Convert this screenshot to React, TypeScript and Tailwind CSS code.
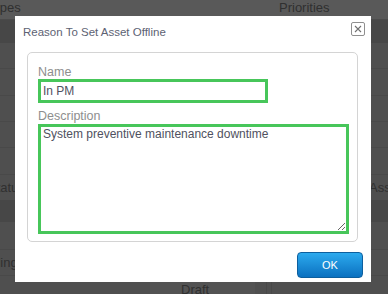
import React from 'react'

function CloseIcon() {
  return (
    <svg width="8" height="8" viewBox="0 0 8 8" className="text-[#707070]">
      <path d="M1 1L7 7M7 1L1 7" stroke="currentColor" strokeWidth="1.1" />
    </svg>
  )
}

// page behind the dialog, dimmed by the overlay
function BackgroundPage() {
  return (
    <div className="flex flex-col h-full bg-[#e2e2e2] text-[13px] leading-4 text-[#8a8a8a]">
      <div className="h-[20px] shrink-0 bg-white flex border-b border-[#d6d6d6]">
        <div className="w-[279px] shrink-0 overflow-hidden">
          <span className="block -ml-[14px]">Types</span>
        </div>
        <span>Priorities</span>
      </div>
      <div className="h-[23px] shrink-0 bg-[#cbcbcb]" />
      <div className="h-[26px] shrink-0 border-b border-[#d2d2d2]" />
      <div className="h-[27px] shrink-0 border-b border-[#d2d2d2]" />
      <div className="h-[26px] shrink-0 border-b border-[#d2d2d2]" />
      <div className="h-[26px] shrink-0 border-b border-[#d2d2d2]" />
      <div className="h-[27px] shrink-0 border-b border-[#d2d2d2]" />
      <div className="h-[25px] shrink-0 flex items-center">
        <div className="w-[369px] shrink-0 overflow-hidden">
          <span className="block -ml-[12px]">Status</span>
        </div>
        <span>Asset</span>
      </div>
      <div className="h-[22px] shrink-0 bg-[#cbcbcb]" />
      <div className="h-[28px] shrink-0 border-b border-[#d2d2d2]" />
      <div className="h-[26px] shrink-0 flex items-center overflow-hidden border-b border-[#d2d2d2]">
        <span className="block -ml-[30px]">Pending</span>
      </div>
      <div className="flex-1 flex">
        <div className="w-[150px] shrink-0" />
        <div className="w-[105px] shrink-0 bg-[#eeeeee] pl-[31px] pt-[6px]">Draft</div>
        <div className="w-[12px] shrink-0 border-r border-[#cfcfcf]" />
        <div className="w-[5px] shrink-0 border-r border-[#cfcfcf]" />
      </div>
    </div>
  )
}

function Dialog() {
  return (
    <div className="absolute left-[15px] top-[16px] w-[356px] h-[266px] bg-white flex flex-col">
      <div className="h-[36px] shrink-0 flex items-start justify-between pl-[8px] pr-[6px] pt-[6px]">
        <h2 className="mt-[2px] text-[11.5px] leading-4 text-[#5d6273]">Reason To Set Asset Offline</h2>
        <button className="w-[14px] h-[14px] border border-[#8f8f8f] rounded-[2px] flex items-center justify-center">
          <CloseIcon />
        </button>
      </div>

      <div className="ml-[12px] mr-[13px] h-[190px] shrink-0 border border-[#d4d4d4] rounded-[5px] pt-[12px] pl-[10px] pr-[8px] flex flex-col">
        <label className="text-[12.5px] leading-[14px] text-[#8e8e8e]">Name</label>
        <input
          readOnly
          value="In PM"
          className="w-[230px] h-[24px] border-[3px] border-[#47c65a] px-[2px] text-[12px] text-[#4f5160] outline-none"
        />
        <label className="mt-[6px] text-[12.5px] leading-[14px] text-[#8e8e8e]">Description</label>
        <textarea
          readOnly
          defaultValue="System preventive maintenance downtime"
          className="mt-[1px] w-[311px] h-[110px] border-[3px] border-[#47c65a] px-[2px] py-0 text-[12px] leading-[15px] text-[#4f5160] outline-none"
        />
      </div>

      <div className="flex justify-end pr-[8px] pt-[10px]">
        <button className="w-[66px] h-[26px] rounded-[4px] border border-[#0d5f9e] bg-linear-to-b from-[#2caaee] to-[#0b71c0] text-white text-[11px]">
          OK
        </button>
      </div>
    </div>
  )
}

export default function App() {
  return (
    <div className="relative w-[388px] h-[294px] overflow-hidden font-['Liberation_Sans',Arial,sans-serif]">
      <BackgroundPage />
      <div className="absolute inset-0 bg-black/65" />
      <Dialog />
    </div>
  )
}
